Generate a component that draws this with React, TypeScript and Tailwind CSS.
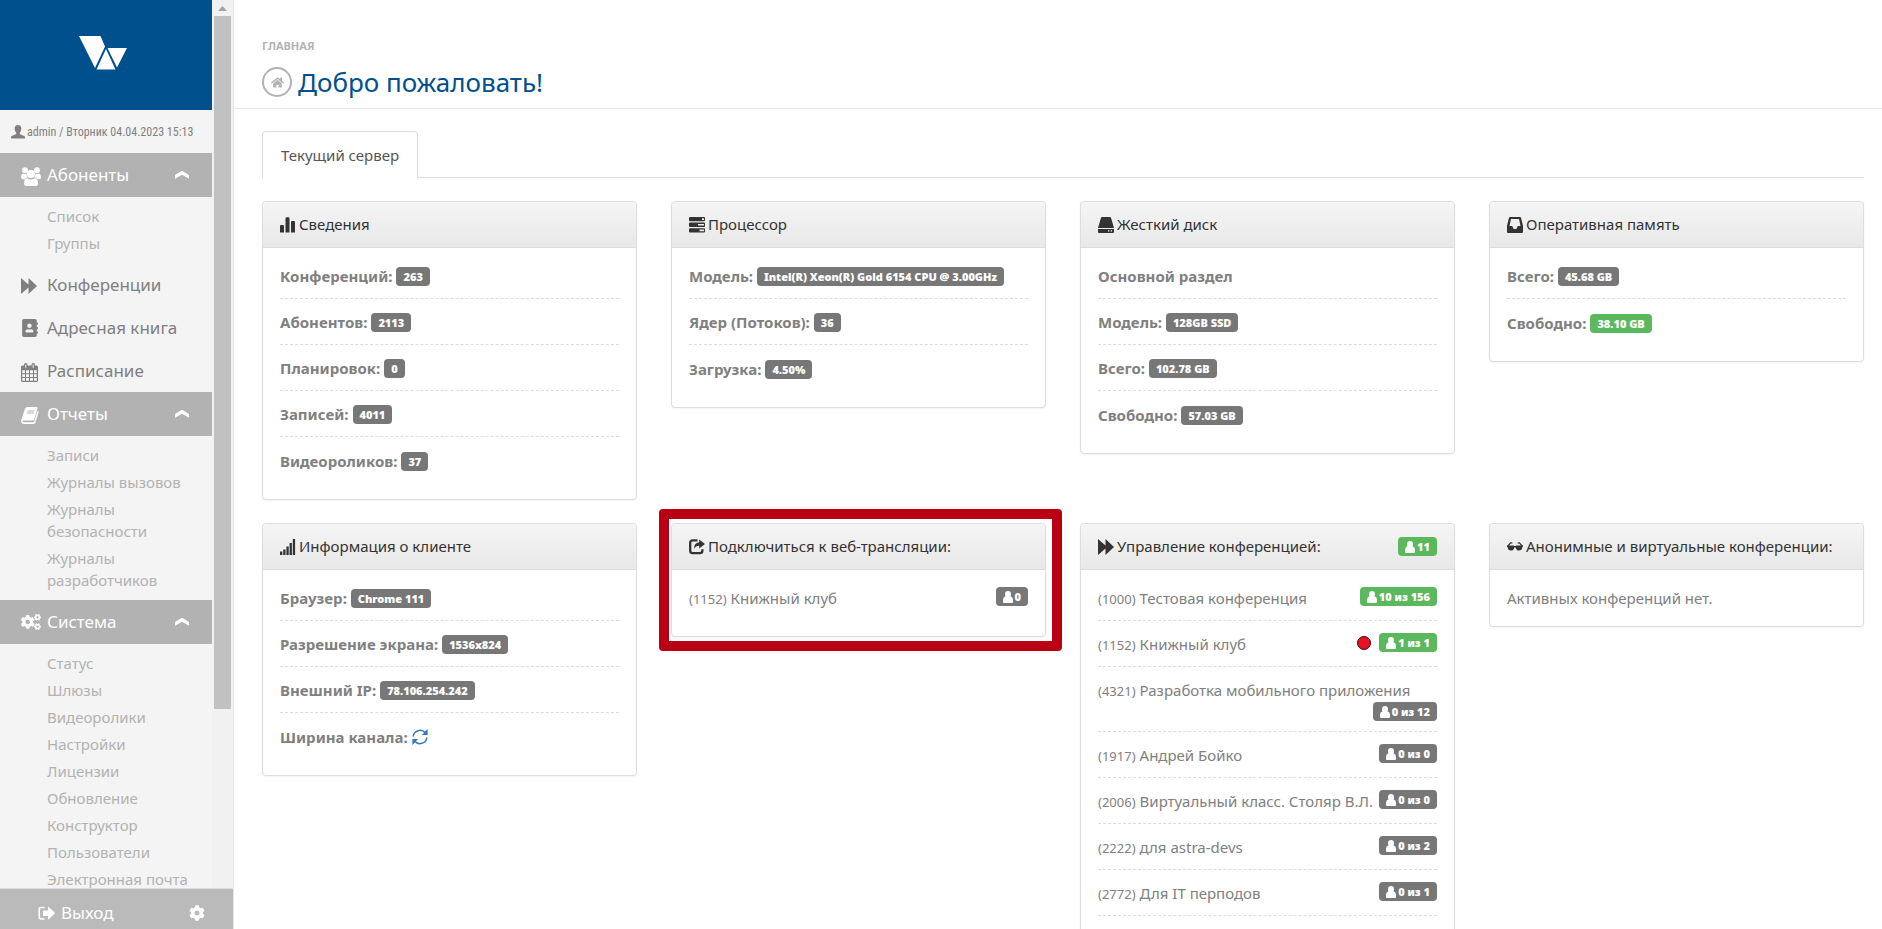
import type { ReactNode } from 'react'
import { FaAddressBook, FaCog, FaCogs, FaHome } from 'react-icons/fa'

// ── Icons ────────────────────────────────────────────────────────────────────

type IconProps = { className?: string }

function Glyph({ className = 'size-4', box = '0 0 16 16', children }: { className?: string; box?: string; children: ReactNode }) {
  return (
    <svg viewBox={box} className={`inline-block shrink-0 ${className}`} fill="currentColor" aria-hidden="true">
      {children}
    </svg>
  )
}

const StatsIcon = () => (
  <Glyph>
    <path d="M0 9q0-1 1-1h2q1 0 1 1v6.500H0zM5.500 1.500q0-1.200 1-1.200h2q1 0 1 1.200v14h-4zM11 5q0-1 1-1h2q1 0 1 1v10.500h-4z" />
  </Glyph>
)

const TasksIcon = () => (
  <Glyph>
    <path fillRule="evenodd" d="M1 0h14q1 0 1 1v2.300q0 1-1 1H1q-1 0-1-1V1q0-1 1-1zm12 1.300v1.600h2V1.300zM1 5.600h14q1 0 1 1V9q0 1-1 1H1Q0 10 0 9V6.600q0-1 1-1zm8 1.300v1.700h6V6.900zM1 11.300h14q1 0 1 1v2.300q0 1-1 1H1q-1 0-1-1v-2.300q0-1 1-1zm9.500 1.300v1.700H15v-1.700z" />
  </Glyph>
)

const DiskIcon = () => (
  <Glyph>
    <path fillRule="evenodd" d="M4 0h8q.8 0 1 .8L16 11H0L3 .8Q3.200 0 4 0zM0 12h16v3q0 1-1 1H1q-1 0-1-1zm10 1.300v1.300h1.300v-1.300zm2.600 0v1.300h1.400v-1.300z" />
  </Glyph>
)

const InboxIcon = () => (
  <Glyph>
    <path fillRule="evenodd" d="M3 0h10q.8 0 1 .8l2 8V15q0 1-1 1H1q-1 0-1-1V8.800l2-8Q2.200 0 3 0zm1 2L2.500 9h2.700l1.500 3h2.600l1.500-3h2.700L12 2z" />
  </Glyph>
)

const SignalIcon = () => (
  <Glyph>
    <path d="M0 12.500h2.300V16H0zM3.200 10.500h2.300V16H3.200zM6.400 7.500h2.300V16H6.400zM9.600 4h2.300v12H9.600zM12.800 0h2.300v16h-2.300z" />
  </Glyph>
)

const ShareIcon = () => (
  <Glyph>
    <path d="M8.500 1.300H3.800Q1.200 1.300 1.200 3.900v7.600q0 2.700 2.600 2.700h7q2.600 0 2.600-2.700v-1.200" fill="none" stroke="currentColor" strokeWidth="2.300" />
    <path d="M10.200.6 16 5l-5.800 4.400V6.700Q6.800 6.600 5 10q-.2-6 5.200-6.700z" />
  </Glyph>
)

const ForwardIcon = ({ className }: IconProps) => (
  <Glyph className={className}>
    <path d="M0 0 7.500 6.600V0L16 8l-8.500 8V9.400L0 16z" />
  </Glyph>
)

const GlassesIcon = () => (
  <Glyph>
    <path d="M0 6.500h7l.4.600h1.200l.4-.600h7V8h-.7q-.1 3.600-3.300 3.600Q9.200 11.600 8.700 8.500H7.300Q6.800 11.600 4 11.600.8 11.600.7 8H0z" />
    <path d="M.8 7 3.800 3.600l1.600.6M15.200 7l-3-3.400-1.600.6" fill="none" stroke="currentColor" strokeWidth="1.200" />
  </Glyph>
)

const RefreshIcon = () => (
  <Glyph className="size-4">
    <path d="M1.200 7.500A6.800 6.800 0 0 1 13.300 4M14.800 8.500A6.800 6.800 0 0 1 2.700 12" fill="none" stroke="currentColor" strokeWidth="1.500" />
    <path d="M15.600 0v6H9.700l2-1.700 1.700-2.300zM.4 16v-6h5.900l-2 1.700L2.600 14z" />
  </Glyph>
)

const UserIcon = ({ className }: IconProps) => (
  <Glyph className={className}>
    <path d="M8 0q3.800 0 3.800 4 0 3.200-1.800 5.200v1l5 2.300q1 .5 1 1.600V15q0 .5-.5.500H.5Q0 15.500 0 15v-.9q0-1.100 1-1.600l5-2.300v-1Q4.200 7.200 4.200 4 4.200 0 8 0z" />
  </Glyph>
)

const BadgeUserIcon = () => (
  <Glyph className="h-3 w-2.5" box="0 0 10 12">
    <path d="M5 0q3 0 3 3.200 0 1.300-.5 2.100Q10 6 10 8.500V11q0 1-1 1H1q-1 0-1-1V8.500Q0 6 2.500 5.300 2 4.500 2 3.200 2 0 5 0z" />
  </Glyph>
)

const GroupIcon = () => (
  <Glyph className="h-[19px] w-5" box="0 0 20 19">
    <circle cx="4" cy="3.200" r="2.900" />
    <circle cx="16" cy="3.200" r="2.900" />
    <circle cx="10" cy="7" r="4.100" />
    <path d="M1.500 6.500q2.300 1 3.900.1.100 2 1.300 3.800-1.900.2-3 1.800H2Q0 12.200 0 10.200 0 7.500 1.500 6.500zM18.500 6.500q-2.300 1-3.900.1-.1 2-1.300 3.800 1.900.2 3 1.800H18q2 0 2-2 0-2.700-1.500-3.700z" />
    <path d="M6.300 11.200q3.700 2.500 7.400 0 3.300.6 3.300 5Q17 19 14.500 19h-9Q3 19 3 16.200q0-4.400 3.300-5z" />
  </Glyph>
)

const CalendarIcon = () => (
  <Glyph className="h-[19px] w-[17px]" box="0 0 17 19">
    <path
      fillRule="evenodd"
      d="M1.500 2.500H3V1.800Q3 0 4.800 0t1.700 1.800v.7h4v-.7Q10.500 0 12.200 0 14 0 14 1.800v.7h1.500Q17 2.500 17 4v13.500q0 1.500-1.500 1.500h-14Q0 19 0 17.500V4q0-1.500 1.500-1.500zM4.300 1.500v3.300h1V1.500zm7.400 0v3.300h1V1.500zM1.200 7.300v2.900H4V7.300zm3.800 0v2.900h3V7.300zm4 0v2.900h3V7.300zm4 0v2.900h2.800V7.300zM1.200 11.200V14H4v-2.800zm3.800 0V14h3v-2.800zm4 0V14h3v-2.800zm4 0V14h2.800v-2.800zM1.200 15v2.800H4V15zM5 15v2.800h3V15zm4 0v2.800h3V15zm4 0v2.800h2.800V15z"
    />
  </Glyph>
)

const BookIcon = () => (
  <Glyph className="h-[17px] w-[18px]" box="0 0 18 17">
    <path
      fillRule="evenodd"
      d="M6.500 0h8.700q1.700 0 1.200 1.800L13.300 12q-.5 1.500-2 1.500H2.500q-1 0-1 .7 0 1 1.500 1h9.200q.8 0 1.100-.9l3.200-10.500q1.300.6.900 2l-3 9.700Q13.900 17 12.500 17H3Q.8 17 .2 15q-.4-1.200.2-2.500L4 1.800Q4.700 0 6.500 0zM6.900 3.400l-.3 1h6.700l.3-1zm-.8 2.200-.3 1h6.700l.3-1z"
    />
  </Glyph>
)

const SignOutIcon = () => (
  <Glyph className="h-[15px] w-[17px]" box="0 0 17 15">
    <path d="M6.500 1.500H3.200q-2 0-2 2v7.500q0 2 2 2h3.300" fill="none" stroke="currentColor" strokeWidth="1.600" />
    <path d="M10 1q.2-.4.700 0l6 5.500q.5.600 0 1.200l-6 5.500q-.5.400-.7 0V10H5.500Q5 10 5 9.500V5q0-.6.600-.6H10z" />
  </Glyph>
)

const ChevronIcon = () => (
  <Glyph className="h-2 w-3.5" box="0 0 14 8">
    <path d="M7 0q.6 0 7 4v3.800L7 3.800l-7 4V4q6.400-4 7-4z" />
  </Glyph>
)

const Logo = () => (
  <svg viewBox="0 0 48 34" className="h-[34px] w-12" fill="#fff" role="img" aria-label="Vinteo">
    <path d="M0 0h21.500L26 10.500 16 32zM28.500 12H48L38 31.500zM27 13l9.500 20.500h-19z" />
  </svg>
)

// ── Data ─────────────────────────────────────────────────────────────────────

type MenuItem = { label: string; icon: ReactNode; children?: string[] }

const MENU: MenuItem[] = [
  { label: 'Абоненты', icon: <GroupIcon />, children: ['Список', 'Группы'] },
  { label: 'Конференции', icon: <ForwardIcon className="size-4" /> },
  { label: 'Адресная книга', icon: <FaAddressBook className="size-[18px]" /> },
  { label: 'Расписание', icon: <CalendarIcon /> },
  {
    label: 'Отчеты',
    icon: <BookIcon />,
    children: ['Записи', 'Журналы вызовов', 'Журналы безопасности', 'Журналы разработчиков'],
  },
  {
    label: 'Система',
    icon: <FaCogs className="size-5" />,
    children: [
      'Статус',
      'Шлюзы',
      'Видеоролики',
      'Настройки',
      'Лицензии',
      'Обновление',
      'Конструктор',
      'Пользователи',
      'Электронная почта',
    ],
  },
]

type Conference = { id: number; name: string; members: string; active?: boolean; recording?: boolean }

const CONFERENCES: Conference[] = [
  { id: 1000, name: 'Тестовая конференция', members: '10 из 156', active: true },
  { id: 1152, name: 'Книжный клуб', members: '1 из 1', active: true, recording: true },
  { id: 4321, name: 'Разработка мобильного приложения', members: '0 из 12' },
  { id: 1917, name: 'Андрей Бойко', members: '0 из 0' },
  { id: 2006, name: 'Виртуальный класс. Столяр В.Л.', members: '0 из 0' },
  { id: 2222, name: 'для astra-devs', members: '0 из 2' },
  { id: 2772, name: 'Для IT перподов', members: '0 из 1' },
]

// ── Building blocks ──────────────────────────────────────────────────────────

function Badge({ green, user, children }: { green?: boolean; user?: boolean; children: ReactNode }) {
  return (
    <span
      className={`inline-flex h-[19px] shrink-0 items-center rounded px-[7px] text-[11px] leading-none font-black whitespace-nowrap text-white ${green ? 'bg-[#5cb85c]' : 'bg-[#777]'}`}
    >
      {user && (
        <span className="mr-0.5 flex">
          <BadgeUserIcon />
        </span>
      )}
      {children}
    </span>
  )
}

function Card({ icon, title, badge, children }: { icon: ReactNode; title: string; badge?: ReactNode; children: ReactNode }) {
  return (
    <section className="rounded border border-[#ddd] bg-white shadow-xs">
      <header className="flex h-[46px] items-center rounded-t border-b border-[#ddd] bg-linear-to-b from-[#f5f5f5] to-[#e8e8e8] px-[17px] text-[#333]">
        <span className="mr-[3px] flex">{icon}</span>
        <h2 className="flex-1 whitespace-nowrap">{title}</h2>
        {badge}
      </header>
      {children}
    </section>
  )
}

function Rows({ children }: { children: ReactNode }) {
  return <ul className="divide-y divide-dashed divide-[#ddd] px-[17px] pt-[5px] pb-4">{children}</ul>
}

function Row({ label, value, green, children }: { label: string; value?: string; green?: boolean; children?: ReactNode }) {
  return (
    <li className="flex h-[46px] items-center gap-1 pt-0.5 font-bold whitespace-nowrap">
      {label}
      {value && <Badge green={green}>{value}</Badge>}
      {children}
    </li>
  )
}

function ConferenceRow({ id, name, members, active, recording }: Conference) {
  return (
    <li className="flex flex-wrap items-start justify-between pt-3 pb-2.5">
      <a href={`#conference-${id}`} className="flex h-[23px] items-baseline gap-1 leading-[23px] whitespace-nowrap">
        <span className="text-[13px]">({id})</span>
        <span>{name}</span>
      </a>
      <span className="ml-auto flex items-center gap-2">
        {recording && <span className="size-3.5 rounded-full border border-[#3a0a0e] bg-[#e81123]" />}
        <Badge user green={active}>
          {members}
        </Badge>
      </span>
    </li>
  )
}

function Sidebar() {
  return (
    <aside className="flex w-[234px] shrink-0 flex-col border-r border-[#e7e7e7] bg-[#f4f4f4]">
      <div className="flex min-h-0 flex-1">
        <div className="flex-1 overflow-hidden">
          <div className="flex h-[110px] items-center justify-center bg-[#00508d] pr-1.5 pb-1">
            <Logo />
          </div>
          <p className="flex h-[43px] items-center gap-0.5 px-[11px] font-['Roboto_Condensed','Open_Sans_Condensed','Noto_Sans_Condensed','Roboto',sans-serif] text-xs whitespace-nowrap text-[#808080]">
            <UserIcon className="size-3.5" />
            admin / Вторник 04.04.2023 15:13
          </p>
          <nav>
            {MENU.map((item) => (
              <div key={item.label}>
                {item.children ? (
                  <button className="flex h-11 w-full items-center bg-[#b2b2b2] pr-[23px] pl-[21px] text-left text-[17px] text-white">
                    <span className="w-[26px]">{item.icon}</span>
                    <span className="flex-1">{item.label}</span>
                    <ChevronIcon />
                  </button>
                ) : (
                  <a href="#menu" className="flex h-[43px] items-center pl-[21px] text-[17px] text-[#808080]">
                    <span className="w-[26px]">{item.icon}</span>
                    {item.label}
                  </a>
                )}
                {item.children && (
                  <ul className="py-1.5 pr-5 pl-[47px] text-[15px] leading-[22px] text-[#b2b2b2]">
                    {item.children.map((child) => (
                      <li key={child} className="pt-0.5 pb-[3px]">
                        <a href="#menu">{child}</a>
                      </li>
                    ))}
                  </ul>
                )}
              </div>
            ))}
          </nav>
        </div>
        <div className="flex w-[21px] flex-col items-center bg-[#f1f1f1]">
          <div className="flex h-4 items-center">
            <svg viewBox="0 0 9 5" className="h-[5px] w-[9px]" fill="#a3a3a3" aria-hidden="true">
              <path d="M4.500 0 9 5H0z" />
            </svg>
          </div>
          <div className="h-[78%] w-[17px] bg-[#c1c1c1]" />
        </div>
      </div>
      <div className="flex h-[41px] items-center justify-between border-t border-[#ddd] bg-[#bababa] pt-2 pr-7 pl-[38px] text-[17px] text-white">
        <button className="flex items-center gap-1.5">
          <SignOutIcon />
          Выход
        </button>
        <button aria-label="Настройки интерфейса">
          <FaCog className="size-4" />
        </button>
      </div>
    </aside>
  )
}

// ── Page ─────────────────────────────────────────────────────────────────────

export default function App() {
  return (
    <div className="flex h-screen overflow-hidden bg-white font-['Noto_Sans',sans-serif] text-[15px] text-[#808080]">
      <Sidebar />
      <main className="min-w-0 flex-1 overflow-hidden">
        <header className="border-b border-[#e7e7e7] pt-[38px] pb-2 pl-7">
          <p className="text-[11px] leading-4 font-bold text-[#b2b2b2] uppercase">Главная</p>
          <h1 className="mt-2.5 flex items-center gap-1.5 text-[26px] leading-9 text-[#00508d]">
            <span className="flex size-[30px] items-center justify-center rounded-full border-2 border-[#b2b2b2] text-[#b2b2b2]">
              <FaHome className="size-[13px]" />
            </span>
            Добро пожаловать!
          </h1>
        </header>

        <div className="pt-[22px] pr-[18px] pl-7">
          <div role="tablist" className="flex border-b border-[#ddd]">
            <button
              role="tab"
              aria-selected="true"
              className="-mb-px h-[47px] rounded-t border border-b-0 border-[#ddd] bg-white px-[18px] text-[#555]"
            >
              Текущий сервер
            </button>
          </div>

          <div className="mt-[23px] grid grid-cols-4 items-start gap-x-[34px] gap-y-[23px]">
            <Card icon={<StatsIcon />} title="Сведения">
              <Rows>
                <Row label="Конференций:" value="263" />
                <Row label="Абонентов:" value="2113" />
                <Row label="Планировок:" value="0" />
                <Row label="Записей:" value="4011" />
                <Row label="Видеороликов:" value="37" />
              </Rows>
            </Card>

            <Card icon={<TasksIcon />} title="Процессор">
              <Rows>
                <Row label="Модель:" value="Intel(R) Xeon(R) Gold 6154 CPU @ 3.00GHz" />
                <Row label="Ядер (Потоков):" value="36" />
                <Row label="Загрузка:" value="4.50%" />
              </Rows>
            </Card>

            <Card icon={<DiskIcon />} title="Жесткий диск">
              <Rows>
                <Row label="Основной раздел" />
                <Row label="Модель:" value="128GB SSD" />
                <Row label="Всего:" value="102.78 GB" />
                <Row label="Свободно:" value="57.03 GB" />
              </Rows>
            </Card>

            <Card icon={<InboxIcon />} title="Оперативная память">
              <Rows>
                <Row label="Всего:" value="45.68 GB" />
                <Row label="Свободно:" value="38.10 GB" green />
              </Rows>
            </Card>

            <Card icon={<SignalIcon />} title="Информация о клиенте">
              <Rows>
                <Row label="Браузер:" value="Chrome 111" />
                <Row label="Разрешение экрана:" value="1536x824" />
                <Row label="Внешний IP:" value="78.106.254.242" />
                <Row label="Ширина канала:">
                  <button aria-label="Обновить" className="flex text-[#337ab7]">
                    <RefreshIcon />
                  </button>
                </Row>
              </Rows>
            </Card>

            <div className="relative">
              <Card icon={<ShareIcon />} title="Подключиться к веб-трансляции:">
                <Rows>
                  <ConferenceRow id={1152} name="Книжный клуб" members="0" />
                </Rows>
              </Card>
              {/* highlight frame */}
              <div className="pointer-events-none absolute -top-3.5 -right-4 -bottom-3.5 -left-3 rounded border-10 border-[#b90014]" />
            </div>

            <Card
              icon={<ForwardIcon className="size-4" />}
              title="Управление конференцией:"
              badge={
                <Badge user green>
                  11
                </Badge>
              }
            >
              <Rows>
                {CONFERENCES.map((conference) => (
                  <ConferenceRow key={conference.id} {...conference} />
                ))}
                <li className="h-[46px]" />
              </Rows>
            </Card>

            <Card icon={<GlassesIcon />} title="Анонимные и виртуальные конференции:">
              <p className="px-[17px] py-[17px] leading-[22px]">Активных конференций нет.</p>
            </Card>
          </div>
        </div>
      </main>
    </div>
  )
}
